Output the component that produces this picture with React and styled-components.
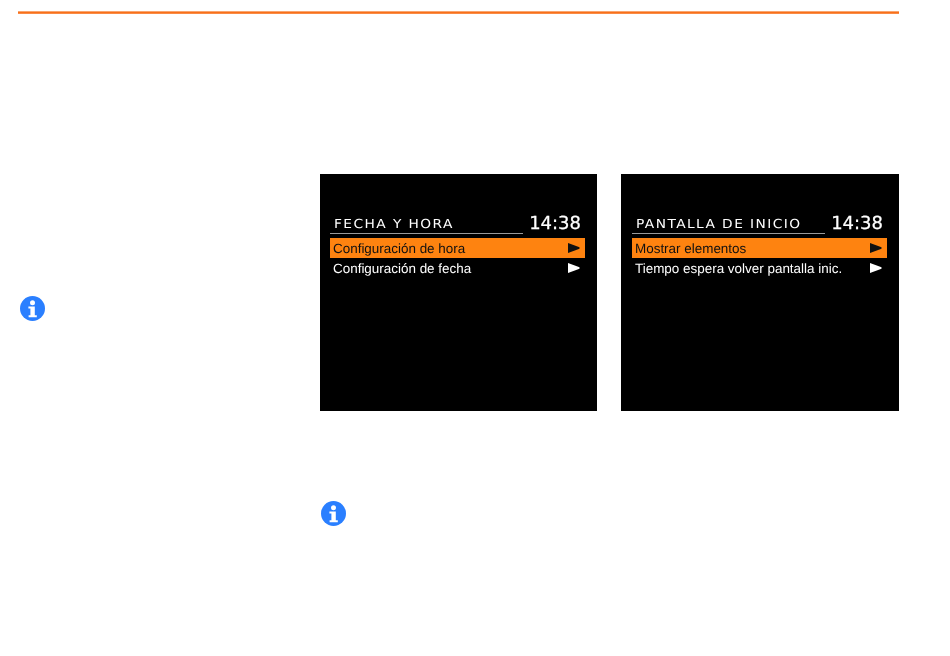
import React from "react";
import styled, { createGlobalStyle } from "styled-components";

const GlobalStyle = createGlobalStyle`
  html, body {
    margin: 0;
    padding: 0;
    background: #fff;
    font-family: "Liberation Sans", Arial, sans-serif;
    text-rendering: geometricPrecision;
  }
`;

const Page = styled.div`
  width: 950px;
  height: 656px;
  box-sizing: border-box;
  padding: 11px 51px 0 18px;
  overflow: hidden;
`;

const Rule = styled.div`
  height: 3px;
  background: linear-gradient(#f9a56f 33%, #f8701a 33% 66%, #f98a45 66%);
`;

const Columns = styled.div`
  display: grid;
  grid-template-columns: 302px 1fr;
`;

const Aside = styled.aside`
  padding: 282px 0 0 2px;
`;

const Main = styled.main`
  padding-top: 160px;
`;

const Screens = styled.div`
  display: grid;
  grid-template-columns: 277px 278px;
  column-gap: 24px;
`;

const Screen = styled.div`
  height: 237px;
  box-sizing: border-box;
  background: #000;
  color: #fff;
  padding: 42px 12px 0 ${props => props.$inset}px;
`;

const ScreenInner = styled.div`
  filter: blur(0.35px);
`;

const ScreenHeader = styled.div`
  display: grid;
  grid-template-columns: 193px 1fr;
  column-gap: 4px;
  height: 18px;
`;

const Title = styled.div`
  border-bottom: 1px solid #9a9a9a;
  padding: 0 0 0 4px;
  font-family: "DejaVu Sans", sans-serif;
  font-size: 12.5px;
  line-height: 15px;
  letter-spacing: 1.3px;
  white-space: nowrap;
`;

const TitleText = styled.span`
  display: inline-block;
  transform: scaleX(1.1);
  transform-origin: left center;
`;

const Clock = styled.div`
  font-family: "DejaVu Sans", sans-serif;
  font-size: 18px;
  line-height: 15px;
  text-align: right;
  padding-right: 4px;
  white-space: nowrap;
  -webkit-text-stroke: 0.25px #fff;
`;

const Menu = styled.ul`
  list-style: none;
  margin: 0;
  padding: 4px 0 0;
`;

const MenuItem = styled.li`
  display: flex;
  align-items: center;
  justify-content: space-between;
  height: 20px;
  padding: 0 5px 0 3px;
  font-size: 13.45px;
  background: ${props => (props.$active ? "#fe8310" : "transparent")};
  color: ${props => (props.$active ? "#111" : "#fff")};
`;

const Arrow = styled.svg`
  width: 12px;
  height: 10px;
  fill: currentColor;
`;

const InfoWrap = styled.div`
  padding: 90px 0 0 1px;
`;

const InfoIcon = () => (
  <svg width="25" height="25" viewBox="0 0 25 25" style={{ display: "block" }}>
    <circle cx="12.5" cy="12.5" r="12.5" fill="#2a7fff" />
    <circle cx="12.5" cy="6.7" r="2.5" fill="#fff" />
    <path d="M8.4 10.4h6.4v8.8h2v2H8.6v-2h1.8v-6.8H8.4z" fill="#fff" />
  </svg>
);

const screens = [
  {
    title: "FECHA Y HORA",
    inset: 10,
    items: ["Configuración de hora", "Configuración de fecha"],
  },
  {
    title: "PANTALLA DE INICIO",
    inset: 11,
    items: ["Mostrar elementos", "Tiempo espera volver pantalla inic."],
  },
];

export default function App() {
  return (
    <Page>
      <GlobalStyle />
      <Rule />
      <Columns>
        <Aside>
          <InfoIcon />
        </Aside>
        <Main>
          <Screens>
            {screens.map(screen => (
              <Screen key={screen.title} $inset={screen.inset}>
                <ScreenInner>
                  <ScreenHeader>
                    <Title>
                      <TitleText>{screen.title}</TitleText>
                    </Title>
                    <Clock>14:38</Clock>
                  </ScreenHeader>
                  <Menu>
                    {screen.items.map((item, i) => (
                      <MenuItem key={item} $active={i === 0}>
                        {item}
                        <Arrow viewBox="0 0 12 10">
                          <path d="M0 0l11.5 4.3v1.4L0 10z" />
                        </Arrow>
                      </MenuItem>
                    ))}
                  </Menu>
                </ScreenInner>
              </Screen>
            ))}
          </Screens>
          <InfoWrap>
            <InfoIcon />
          </InfoWrap>
        </Main>
      </Columns>
    </Page>
  );
}
